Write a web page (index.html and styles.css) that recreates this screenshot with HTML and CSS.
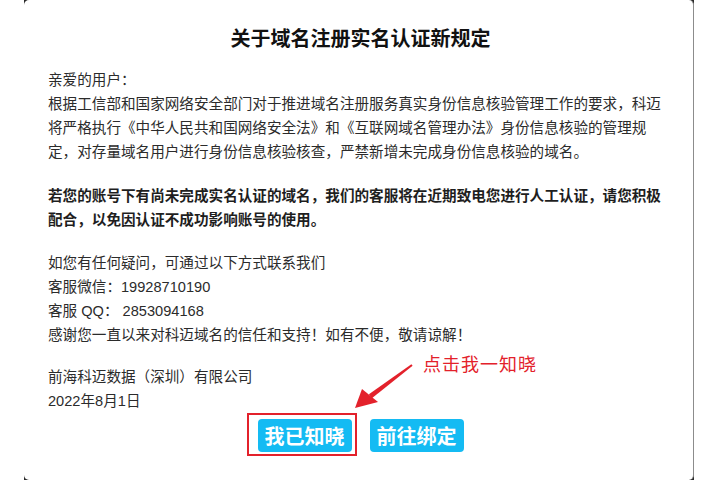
FILE: index.html
```html
<!DOCTYPE html>
<html lang="zh-CN">
<head>
  <meta charset="UTF-8" />
  <title>关于域名注册实名认证新规定</title>
  <link rel="stylesheet" href="styles.css">
</head>
<body>
  <div class="frame">
    <div class="modal">
      <h1>关于域名注册实名认证新规定</h1>

      <p class="intro">
        亲爱的用户：<br>
        根据工信部和国家网络安全部门对于推进域名注册服务真实身份信息核验管理工作的要求，科迈将严格执行《中华人民共和国网络安全法》和《互联网域名管理办法》身份信息核验的管理规定，对存量域名用户进行身份信息核验核查，严禁新增未完成身份信息核验的域名。
      </p>

      <p class="notice">
        若您的账号下有尚未完成实名认证的域名，我们的客服将在近期致电您进行人工认证，请您积极配合，以免因认证不成功影响账号的使用。
      </p>

      <p>
        如您有任何疑问，可通过以下方式联系我们<br>
        客服微信：19928710190<br>
        客服 QQ： 2853094168<br>
        感谢您一直以来对科迈域名的信任和支持！如有不便，敬请谅解！
      </p>

      <p class="sign">
        前海科迈数据（深圳）有限公司<br>
        2022年8月1日
      </p>

      <div class="actions">
        <button type="button" class="btn">我已知晓<span class="highlight"></span></button>
        <button type="button" class="btn">前往绑定</button>
      </div>

      <span class="hint">点击我一知晓</span>
      <svg class="arrow" width="70" height="55" viewBox="0 0 70 55">
        <polygon points="63.6,5.8 62.4,4.2 19.9,34.2 22.9,38.2" fill="#e3212b"/>
        <polygon points="6,48 13,29 29,42" fill="#e3212b"/>
      </svg>
    </div>
  </div>
</body>
</html>
```

FILE: styles.css
```css
body {
  margin: 0;
  background: #fff;
  font-family: "Liberation Sans", "Noto Sans CJK SC", sans-serif;
  color: #2b2b2b;
}
.frame {
  margin-left: 24px;
  width: 670px;
  height: 480px;
  background: #2a2a2a;
  overflow: hidden;
}
.modal {
  position: relative;
  height: 480px;
  box-sizing: border-box;
  background: #fff;
  border-right: 1px solid #8c8c8c;
  border-radius: 5px;
  padding: 24px 20px 0 24px;
}
h1 {
  margin: 0 0 14px;
  font-size: 20px;
  line-height: 30px;
  font-weight: 700;
  color: #111;
  text-align: center;
}
p {
  margin: 0 0 19px;
  font-size: 14.6px;
  line-height: 24px;
}
.intro {
  margin-bottom: 20px;
}
.notice {
  font-weight: 700;
  color: #1e1e1e;
}
.sign {
  margin-bottom: 0;
  line-height: 23.5px;
}
.actions {
  display: flex;
  justify-content: center;
  gap: 18px;
  margin-top: 6px;
}
.btn {
  position: relative;
  height: 33px;
  padding: 0 7px;
  border: none;
  border-radius: 4px;
  background: #14bbf3;
  color: #fff;
  font-family: "Noto Sans CJK SC", sans-serif;
  font-size: 20px;
  font-weight: 700;
  line-height: 33px;
  cursor: pointer;
}
.highlight {
  position: absolute;
  left: -11px;
  top: -6px;
  right: -5px;
  bottom: -4px;
  border: 2px solid #e3212b;
}
.hint {
  position: absolute;
  left: 399px;
  top: 353px;
  font-family: "Noto Sans CJK SC", sans-serif;
  font-size: 18px;
  line-height: 20px;
  letter-spacing: 1px;
  color: #e3212b;
}
.arrow {
  position: absolute;
  left: 325px;
  top: 360px;
}
```
